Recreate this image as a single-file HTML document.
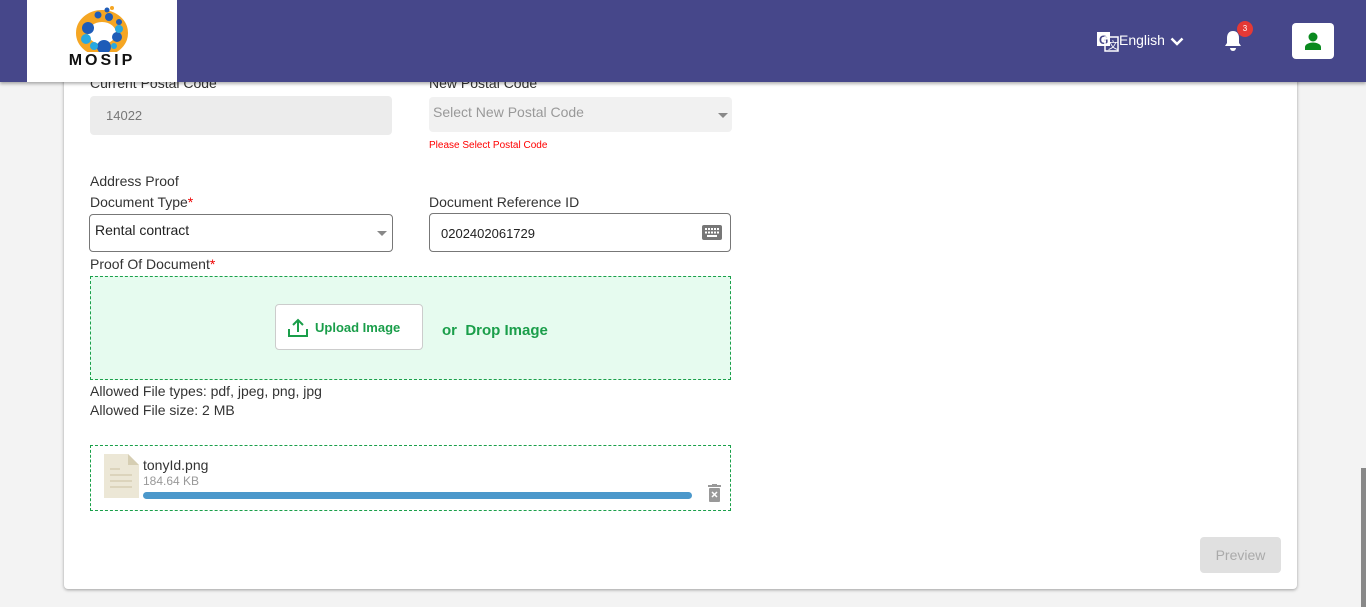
<!DOCTYPE html>
<html><head><meta charset="utf-8"><style>
*{box-sizing:border-box;margin:0;padding:0}
body{width:1366px;height:607px;overflow:hidden;background:#f3f3f3;font-family:"Liberation Sans",sans-serif;position:relative;color:#333}
.a{position:absolute}
.card{left:64px;top:60px;width:1233px;height:529px;background:#fff;border-radius:4px;box-shadow:0 1px 3px rgba(0,0,0,.35)}
.hdr{left:0;top:0;width:1366px;height:82px;background:#46478a;box-shadow:0 2px 3px rgba(0,0,0,.3)}
.logo{left:27px;top:0;width:150px;height:82px;background:#fff}
.lbl{font-size:14px;color:#333}
.red{color:#e00}
</style></head><body>
<div class="a card"></div>
<div class="a lbl" style="left:90px;top:75px">Current Postal Code</div>
<div class="a lbl" style="left:429px;top:75px">New Postal Code</div>
<div class="a" style="left:90px;top:96px;width:302px;height:39px;background:#ececec;border-radius:4px;font-size:13px;color:#777;padding:12px 16px">14022</div>
<div class="a" style="left:429px;top:97px;width:303px;height:35px;background:#f1f1f1;border-radius:4px;font-size:14px;color:#999;padding:7px 4px">Select New Postal Code</div>
<div class="a" style="left:718px;top:113px;border:5px solid transparent;border-top-color:#888;border-bottom:0"></div>
<div class="a" style="left:429px;top:140px;font-size:10px;color:#f00">Please Select Postal Code</div>
<div class="a lbl" style="left:90px;top:173px">Address Proof</div>
<div class="a lbl" style="left:90px;top:194px">Document Type<span class="red">*</span></div>
<div class="a lbl" style="left:429px;top:194px">Document Reference ID</div>
<div class="a" style="left:89px;top:214px;width:304px;height:38px;border:1px solid #777;border-radius:4px;font-size:14px;color:#222;padding:7px 5px">Rental contract</div>
<div class="a" style="left:377px;top:231px;border:5px solid transparent;border-top-color:#888;border-bottom:0"></div>
<div class="a" style="left:429px;top:213px;width:302px;height:39px;border:1px solid #777;border-radius:4px;font-size:13px;color:#222;padding:12px 11px">0202402061729</div>
<svg class="a" style="left:702px;top:225px" width="20" height="15" viewBox="0 0 20 15"><rect width="20" height="15" rx="2" fill="#777"/><g fill="#fff"><rect x="3" y="3" width="2" height="2"/><rect x="6" y="3" width="2" height="2"/><rect x="9" y="3" width="2" height="2"/><rect x="12" y="3" width="2" height="2"/><rect x="15" y="3" width="2" height="2"/><rect x="3" y="6.5" width="2" height="2"/><rect x="6" y="6.5" width="2" height="2"/><rect x="9" y="6.5" width="2" height="2"/><rect x="12" y="6.5" width="2" height="2"/><rect x="15" y="6.5" width="2" height="2"/><rect x="5" y="10" width="10" height="2"/></g></svg>
<div class="a lbl" style="left:90px;top:256px">Proof Of Document<span class="red">*</span></div>
<div class="a" style="left:90px;top:276px;width:641px;height:104px;background:#e6fbef;border:1px dashed #1aa04a"></div>
<div class="a" style="left:275px;top:304px;width:148px;height:46px;background:#fff;border:1px solid #ccc;border-radius:4px"></div>
<svg class="a" style="left:288px;top:318px" width="20" height="19" viewBox="0 0 20 19" fill="none" stroke="#1a9e4a" stroke-width="2"><path d="M1 11v7h18v-7M10 14V2M5 7l5-5 5 5"/></svg>
<div class="a" style="left:315px;top:320px;font-size:13px;color:#1a9e4a;font-weight:bold">Upload Image</div>
<div class="a" style="left:442px;top:322px;font-size:15px;color:#1a9e4a;font-weight:bold">or&nbsp; Drop Image</div>
<div class="a lbl" style="left:90px;top:383px">Allowed File types: pdf, jpeg, png, jpg</div>
<div class="a lbl" style="left:90px;top:402px">Allowed File size: 2 MB</div>
<div class="a" style="left:90px;top:445px;width:641px;height:66px;border:1px dashed #1aa04a"></div>
<svg class="a" style="left:104px;top:454px" width="35" height="44" viewBox="0 0 35 44"><path d="M0 0h24l11 11v33H0z" fill="#ece7d6"/><path d="M24 0l11 11H24z" fill="#d6ceb3"/><g stroke="#d6ceb3" stroke-width="1.5"><path d="M6 15h10M6 21h22M6 27h22M6 33h22"/></g></svg>
<div class="a" style="left:143px;top:457px;font-size:14px;color:#333">tonyId.png</div>
<div class="a" style="left:143px;top:474px;font-size:12px;color:#999">184.64 KB</div>
<div class="a" style="left:143px;top:492px;width:549px;height:7px;background:#4b98cb;border-radius:4px"></div>
<svg class="a" style="left:708px;top:484px" width="13" height="18" viewBox="0 0 13 18"><rect x="0" y="1" width="13" height="2" fill="#999"/><rect x="4" y="0" width="5" height="2" fill="#999"/><rect x="1" y="4" width="11" height="14" rx="1" fill="#999"/><path d="M4 8l5 5M9 8l-5 5" stroke="#fff" stroke-width="1.5"/></svg>
<div class="a" style="left:1200px;top:537px;width:81px;height:36px;background:#e0e0e0;border-radius:4px;font-size:14px;color:#aaa;text-align:center;line-height:36px">Preview</div>
<div class="a" style="left:1361px;top:468px;width:5px;height:139px;background:#888"></div>
<div class="a hdr"></div>
<div class="a logo">
<svg class="a" style="left:49px;top:6px" width="52" height="46" viewBox="0 0 52 46"><ellipse cx="26" cy="27" rx="20" ry="17" fill="none" stroke="#f5a623" stroke-width="12"/><g fill="#1e5cb8"><circle cx="12" cy="22" r="6"/><circle cx="28" cy="41" r="7"/><circle cx="41" cy="31" r="5"/><circle cx="33" cy="11" r="4"/><circle cx="43" cy="16" r="3"/><circle cx="31" cy="4" r="2.5"/><circle cx="22" cy="9" r="3.5"/></g><g fill="#29a8e0"><circle cx="10" cy="33" r="5"/><circle cx="43" cy="23" r="4"/><circle cx="18" cy="40" r="4"/><circle cx="38" cy="40" r="3"/></g><circle cx="36" cy="2" r="2" fill="#f5a623"/></svg>
<div class="a" style="left:0;top:52px;width:150px;text-align:center;font-size:16px;font-weight:bold;letter-spacing:3px;color:#111">MOSIP</div>
</div>
<svg class="a" style="left:1097px;top:32px" width="22" height="20" viewBox="0 0 22 20"><rect x="0" y="0" width="13" height="14" fill="#fff"/><text x="2" y="12" font-size="12" font-weight="bold" fill="#46478a" font-family="Liberation Sans">G</text><rect x="8" y="5" width="13" height="14" fill="none" stroke="#fff" stroke-width="1.5"/><text x="11" y="17" font-size="10" fill="#fff" font-family="Liberation Sans">文</text></svg>
<div class="a" style="left:1119px;top:32px;font-size:14px;color:#fff">English</div>
<svg class="a" style="left:1170px;top:37px" width="14" height="9" viewBox="0 0 14 9"><path d="M1.5 1.5l5.5 5.5 5.5-5.5" stroke="#fff" stroke-width="2.5" fill="none"/></svg>
<svg class="a" style="left:1223px;top:30px" width="20" height="22" viewBox="0 0 20 22"><path d="M10 1c-4 0-6 3-6 7v5l-2 3h16l-2-3V8c0-4-2-7-6-7z" fill="#fff"/><path d="M7 18a3 3 0 0 0 6 0z" fill="#fff"/></svg>
<div class="a" style="left:1237px;top:21px;width:16px;height:16px;border-radius:50%;background:#e53935;color:#fff;font-size:8px;text-align:center;line-height:16px">3</div>
<div class="a" style="left:1292px;top:23px;width:42px;height:36px;background:#fff;border-radius:4px"></div>
<svg class="a" style="left:1304px;top:32px" width="18" height="18" viewBox="0 0 18 18"><circle cx="9" cy="5" r="4.5" fill="#0a8a1f"/><path d="M1 18v-3c0-3 5-4.5 8-4.5s8 1.5 8 4.5v3z" fill="#0a8a1f"/></svg>
</body></html>
